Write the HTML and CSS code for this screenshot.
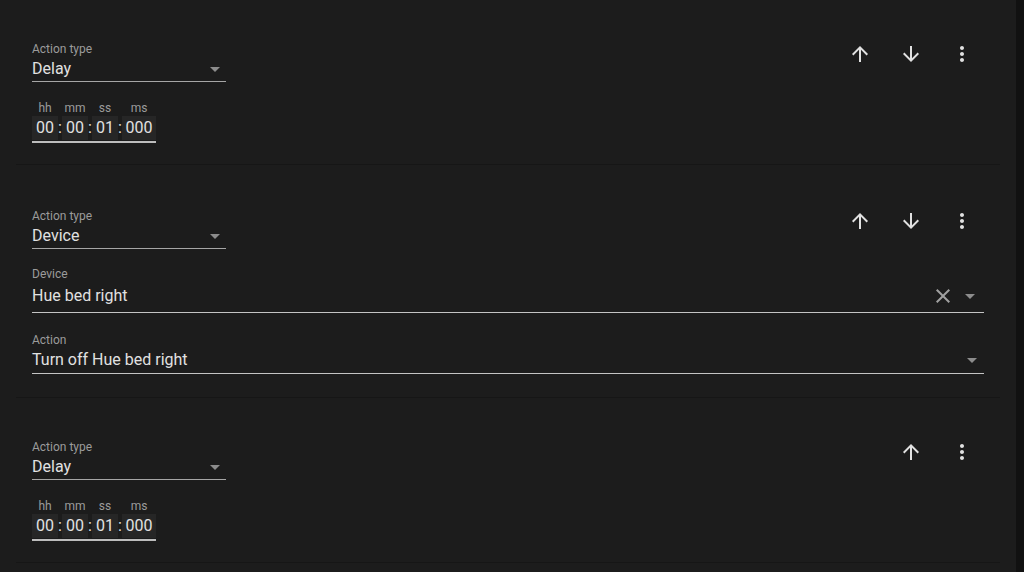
FILE: index.html
```html
<!DOCTYPE html>
<html lang="en">
  <head>
    <meta charset="UTF-8" />
    <meta name="viewport" content="width=device-width, initial-scale=1.0" />
    <title>Actions</title>
    <link rel="stylesheet" href="styles.css">
  </head>
  <body>
    <div class="card">
      <section class="action">
        <div class="action-head">
          <div class="select">
            <div class="label">Action type</div>
            <div class="value">Delay<span class="caret"></span></div>
          </div>
          <div class="tools">
            <button class="icon-btn" title="Move up">
              <svg viewBox="0 0 24 24"><path d="M4 12l1.41 1.41L11 7.83V20h2V7.83l5.58 5.59L20 12l-8-8-8 8z"/></svg>
            </button>
            <button class="icon-btn" title="Move down">
              <svg viewBox="0 0 24 24"><path d="M20 12l-1.41-1.41L13 16.17V4h-2v12.17l-5.58-5.59L4 12l8 8 8-8z"/></svg>
            </button>
            <button class="icon-btn" title="More">
              <svg viewBox="0 0 24 24"><path d="M12 8c1.1 0 2-.9 2-2s-.9-2-2-2-2 .9-2 2 .9 2 2 2zm0 2c-1.1 0-2 .9-2 2s.9 2 2 2 2-.9 2-2-.9-2-2-2zm0 6c-1.1 0-2 .9-2 2s.9 2 2 2 2-.9 2-2-.9-2-2-2z"/></svg>
            </button>
          </div>
        </div>
        <div class="time">
          <div class="time-part">
            <div class="time-label">hh</div>
            <div class="time-box">00</div>
          </div>
          <span class="colon">:</span>
          <div class="time-part">
            <div class="time-label">mm</div>
            <div class="time-box">00</div>
          </div>
          <span class="colon">:</span>
          <div class="time-part">
            <div class="time-label">ss</div>
            <div class="time-box">01</div>
          </div>
          <span class="colon">:</span>
          <div class="time-part ms">
            <div class="time-label">ms</div>
            <div class="time-box">000</div>
          </div>
        </div>
      </section>

      <section class="action">
        <div class="action-head">
          <div class="select">
            <div class="label">Action type</div>
            <div class="value">Device<span class="caret"></span></div>
          </div>
          <div class="tools">
            <button class="icon-btn" title="Move up">
              <svg viewBox="0 0 24 24"><path d="M4 12l1.41 1.41L11 7.83V20h2V7.83l5.58 5.59L20 12l-8-8-8 8z"/></svg>
            </button>
            <button class="icon-btn" title="Move down">
              <svg viewBox="0 0 24 24"><path d="M20 12l-1.41-1.41L13 16.17V4h-2v12.17l-5.58-5.59L4 12l8 8 8-8z"/></svg>
            </button>
            <button class="icon-btn" title="More">
              <svg viewBox="0 0 24 24"><path d="M12 8c1.1 0 2-.9 2-2s-.9-2-2-2-2 .9-2 2 .9 2 2 2zm0 2c-1.1 0-2 .9-2 2s.9 2 2 2 2-.9 2-2-.9-2-2-2zm0 6c-1.1 0-2 .9-2 2s.9 2 2 2 2-.9 2-2-.9-2-2-2z"/></svg>
            </button>
          </div>
        </div>
        <div class="field device">
          <div class="label">Device</div>
          <div class="value">
            <span class="text">Hue bed right</span>
            <svg class="clear" viewBox="0 0 24 24"><path d="M19 6.41L17.59 5 12 10.59 6.41 5 5 6.41 10.59 12 5 17.59 6.41 19 12 13.41 17.59 19 19 17.59 13.41 12z"/></svg>
            <span class="caret"></span>
          </div>
        </div>
        <div class="field service">
          <div class="label">Action</div>
          <div class="value">
            <span class="text">Turn off Hue bed right</span>
            <span class="caret"></span>
          </div>
        </div>
      </section>

      <section class="action">
        <div class="action-head">
          <div class="select">
            <div class="label">Action type</div>
            <div class="value">Delay<span class="caret"></span></div>
          </div>
          <div class="tools">
            <button class="icon-btn" title="Move up">
              <svg viewBox="0 0 24 24"><path d="M4 12l1.41 1.41L11 7.83V20h2V7.83l5.58 5.59L20 12l-8-8-8 8z"/></svg>
            </button>
            <button class="icon-btn" title="More">
              <svg viewBox="0 0 24 24"><path d="M12 8c1.1 0 2-.9 2-2s-.9-2-2-2-2 .9-2 2 .9 2 2 2zm0 2c-1.1 0-2 .9-2 2s.9 2 2 2 2-.9 2-2-.9-2-2-2zm0 6c-1.1 0-2 .9-2 2s.9 2 2 2 2-.9 2-2-.9-2-2-2z"/></svg>
            </button>
          </div>
        </div>
        <div class="time">
          <div class="time-part">
            <div class="time-label">hh</div>
            <div class="time-box">00</div>
          </div>
          <span class="colon">:</span>
          <div class="time-part">
            <div class="time-label">mm</div>
            <div class="time-box">00</div>
          </div>
          <span class="colon">:</span>
          <div class="time-part">
            <div class="time-label">ss</div>
            <div class="time-box">01</div>
          </div>
          <span class="colon">:</span>
          <div class="time-part ms">
            <div class="time-label">ms</div>
            <div class="time-box">000</div>
          </div>
        </div>
      </section>
    </div>
  </body>
</html>
```

FILE: styles.css
```css
body {
  margin: 0;
  background-color: #111111;
  font-family: Roboto, "Noto Sans", Arial, sans-serif;
  color: #e1e1e1;
}

.card {
  width: 1016px;
  height: 572px;
  overflow: hidden;
  background-color: #1c1c1c;
}

.action {
  margin: 0 16px;
  padding: 30px 16px 21px;
  border-bottom: 1px solid #161616;
}

.action:nth-child(2) {
  padding-top: 32px;
  padding-bottom: 23px;
}

.action-head {
  display: flex;
  justify-content: space-between;
  align-items: flex-start;
}

.select {
  width: 194px;
  padding-top: 11px;
}

.label {
  font-size: 12px;
  line-height: 16px;
  color: #9b9b9b;
}

.value {
  position: relative;
  font-size: 16px;
  line-height: 24px;
  color: #e1e1e1;
  border-bottom: 1px solid #a6a6a6;
}

.caret {
  position: absolute;
  right: 6px;
  top: 10px;
  width: 0;
  height: 0;
  border-left: 5px solid transparent;
  border-right: 5px solid transparent;
  border-top: 5px solid #8c8c8c;
}

.tools {
  display: flex;
  margin-right: -3px;
}

.icon-btn {
  width: 51px;
  height: 48px;
  padding: 0;
  border: none;
  background: none;
  display: flex;
  align-items: center;
  justify-content: center;
  cursor: pointer;
}

.icon-btn svg {
  width: 24px;
  height: 24px;
  fill: #e1e1e1;
}

.field {
  margin-top: 17px;
}

.field .value {
  display: flex;
  align-items: center;
  margin-top: 2px;
  padding-bottom: 4px;
  border-bottom-color: #c4c4c4;
}

.field.service {
  margin-top: 19px;
}

.field.service .value {
  margin-top: 0;
  padding-bottom: 1px;
}

.field .text {
  flex: 1;
}

.field .caret {
  position: static;
  margin: 0 7px 0 16px;
}

.field .clear {
  width: 24px;
  height: 24px;
  fill: #a0a0a0;
}

.device .caret {
  margin-left: 10px;
  margin-right: 9px;
}

.time {
  display: inline-flex;
  align-items: flex-end;
  margin-top: 18px;
  border-bottom: 2px solid #bdbdbd;
  padding-bottom: 1px;
}

.time-part {
  display: flex;
  flex-direction: column;
  align-items: center;
  width: 26px;
}

.time-part.ms {
  width: 34px;
}

.time-label {
  font-size: 12px;
  line-height: 16px;
  color: #9b9b9b;
}

.time-box {
  width: 100%;
  text-align: center;
  font-size: 16px;
  line-height: 24px;
  background-color: #262626;
  color: #e1e1e1;
}

.colon {
  width: 4px;
  text-align: center;
  font-size: 16px;
  line-height: 24px;
  color: #e1e1e1;
}
```
